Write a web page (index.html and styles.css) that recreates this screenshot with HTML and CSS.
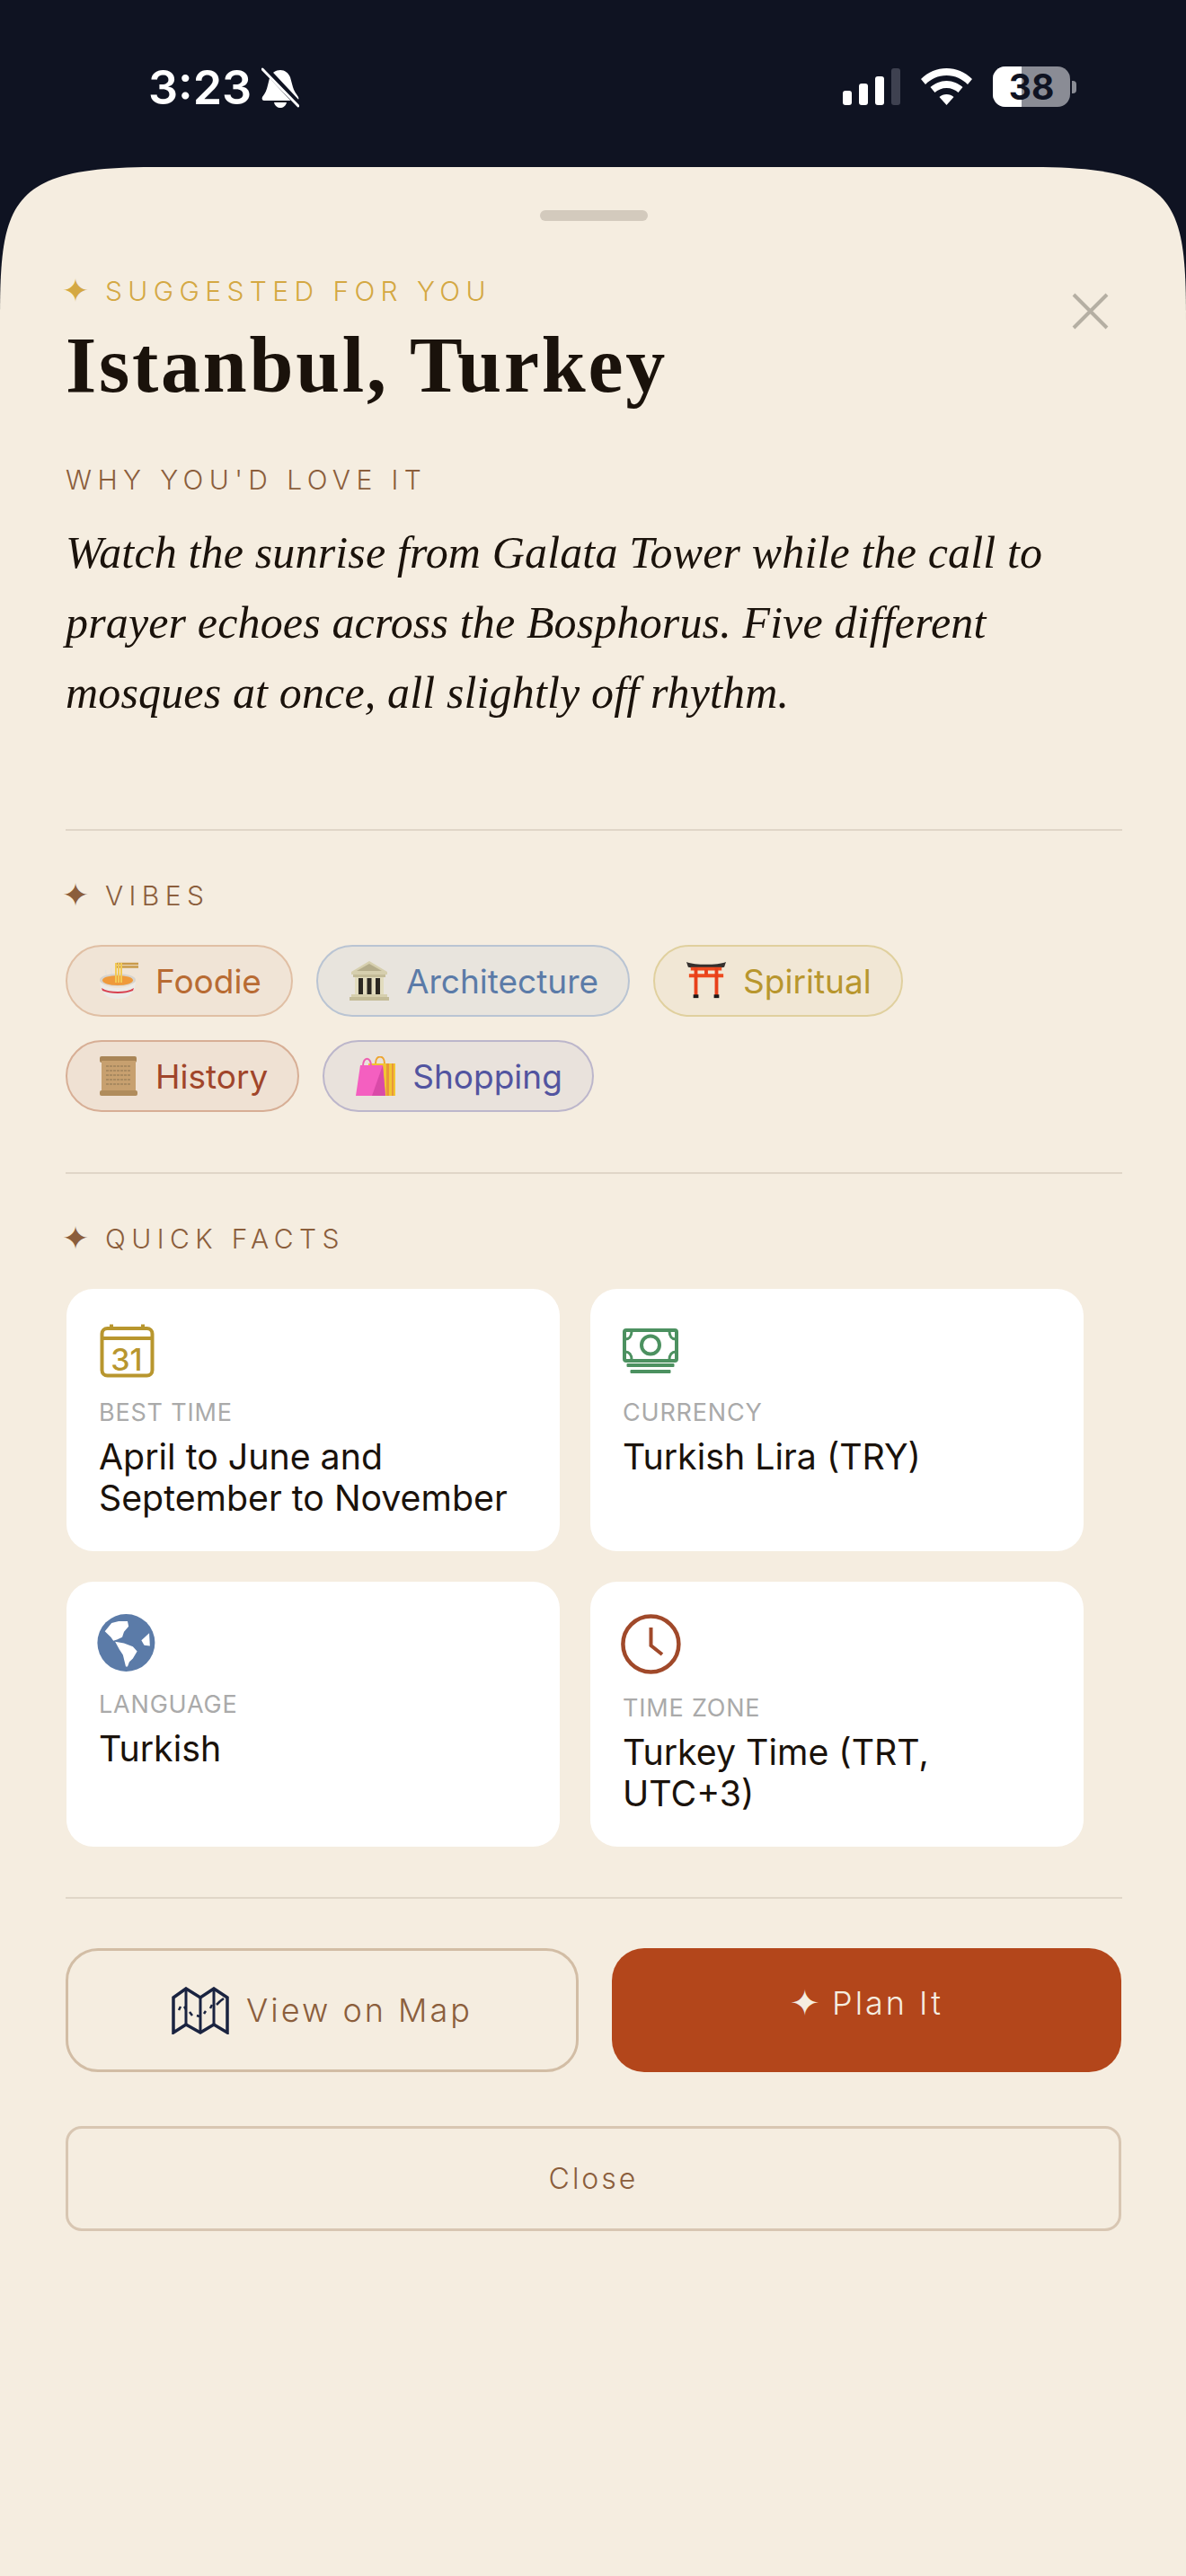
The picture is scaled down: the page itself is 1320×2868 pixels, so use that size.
FILE: index.html
```html
<!DOCTYPE html>
<html lang="en">
<head>
  <meta charset="UTF-8">
  <meta name="viewport" content="width=device-width, initial-scale=1.0">
  <title>Istanbul, Turkey</title>
  <link rel="stylesheet" href="styles.css">
</head>
<body>

  <!-- Status bar -->
  <header class="status-bar">
    <div class="status-left">
      <span class="status-time">3:23</span>
      <svg class="status-bell" viewBox="0 0 42 45">
        <path d="M21 3c5 0 9 3 11 8l3 11c1 4 4 8 6 11 1 2 0 4-2 4H3c-2 0-3-2-2-4 3-4 5-8 6-13l2-8c2-6 7-9 12-9z" fill="#fff"/>
        <path d="M14 39h14c-1 4-4 6-7 6s-6-2-7-6z" fill="#fff"/>
        <path d="M0 -3L42 42" stroke="#0f1322" stroke-width="7"/>
        <path d="M1 2L41 43" stroke="#fff" stroke-width="3" stroke-linecap="round"/>
      </svg>
    </div>
    <div class="status-right">
      <div class="signal">
        <span class="signal-bar signal-1"></span>
        <span class="signal-bar signal-2"></span>
        <span class="signal-bar signal-3"></span>
        <span class="signal-bar signal-4"></span>
      </div>
      <svg class="status-wifi" viewBox="0 0 57 41" fill="#fff">
        <path d="M28.500 0C39 0 49 4 57 12l-5 6C46 12 38 8 28.500 8S11 12 5 18l-5-6C8 4 18 0 28.500 0z"/>
        <path d="M28.500 14c7 0 13 3 18 7l-5 6c-3-3-8-5-13-5s-10 2-13 5l-5-6c5-4 11-7 18-7z"/>
        <path d="M28.500 29c3 0 6 1 8 3l-8 9-8-9c2-2 5-3 8-3z"/>
      </svg>
      <div class="battery">
        <div class="battery-body"><div class="battery-fill"></div><span class="battery-text">38</span></div>
        <div class="battery-nub"></div>
      </div>
    </div>
  </header>

  <main class="sheet">
    <div class="grabber"></div>

    <svg class="close-x" viewBox="0 0 41 41">
      <path d="M2 2L39 39M39 2L2 39" stroke="#b5afa3" stroke-width="4" fill="none"/>
    </svg>

    <div class="eyebrow"><span class="spark">✦</span>SUGGESTED FOR YOU</div>
    <h1 class="title">Istanbul, Turkey</h1>

    <div class="why-label">WHY YOU'D LOVE IT</div>
    <p class="why-text">Watch the sunrise from Galata Tower while the call to prayer echoes across the Bosphorus. Five different mosques at once, all slightly off rhythm.</p>

    <hr class="rule rule-why">

    <!-- Vibes -->
    <div class="section-label"><span class="spark">✦</span>VIBES</div>
    <div class="chips">
      <div class="chip chip-foodie">
        <svg class="chip-emoji" viewBox="0 0 44 44">
          <path d="M20 3H44M20 6.500H44" stroke="#c99a4a" stroke-width="2.500"/>
          <path d="M8 10c-2 3 2 4 0 8M14 8c-2 3 2 4 0 8" stroke="#e6e2da" stroke-width="1.500" fill="none"/>
          <ellipse cx="21" cy="21" rx="20" ry="7" fill="#d6d3ce"/>
          <ellipse cx="21" cy="21.500" rx="17" ry="5.500" fill="#ef9a3c"/>
          <path d="M18 2h2v22h-2zM21 2h2v22h-2zM24 2h2v22h-2z" fill="#f3ca55"/>
          <path d="M1 23c1 12 7 19 20 19s19-7 20-19c-5 5-12 7-20 7S6 28 1 23z" fill="#ecebe8"/>
          <path d="M3 30c5 3 11 4 18 4s13-1 18-4l-1 3c-5 2-10 3-17 3s-12-1-17-3z" fill="#d8404f"/>
        </svg>
        <span>Foodie</span>
      </div>
      <div class="chip chip-arch">
        <svg class="chip-emoji" viewBox="0 0 44 44">
          <path d="M22 0L42 12v3H2v-3z" fill="#d6cfae"/>
          <path d="M22 3L36 11H8z" fill="#b4ac8a"/>
          <rect x="4" y="15" width="36" height="3" fill="#c4bc98"/>
          <rect x="6" y="18" width="32" height="19" fill="#e2dcbe"/>
          <rect x="10" y="19" width="5" height="18" fill="#2b2822"/>
          <rect x="19.500" y="19" width="5" height="18" fill="#2b2822"/>
          <rect x="29" y="19" width="5" height="18" fill="#2b2822"/>
          <rect x="2" y="37" width="40" height="3" fill="#d6cfae"/>
          <rect x="0" y="40" width="44" height="4" fill="#c4bc98"/>
        </svg>
        <span>Architecture</span>
      </div>
      <div class="chip chip-spiritual">
        <svg class="chip-emoji" viewBox="0 0 46 44">
          <path d="M0 0c10 4 36 4 46 0l-2 6c-10 2-32 2-42 0z" fill="#34302e"/>
          <path d="M5 6h36v4H5zM3 14h40v4H3z" fill="#ee4a1e"/>
          <path d="M9 7h4v32H9zM33 7h4v32h-4zM21 9h4v6h-4z" fill="#e8401a"/>
          <rect x="8" y="38" width="6" height="4" fill="#1c1a1a"/>
          <rect x="32" y="38" width="6" height="4" fill="#1c1a1a"/>
        </svg>
        <span>Spiritual</span>
      </div>
      <div class="chip chip-history">
        <svg class="chip-emoji" viewBox="0 0 44 44">
          <rect x="1" y="0" width="41" height="7" rx="2" fill="#a98557"/>
          <rect x="3" y="5" width="38" height="34" fill="#c7a06f"/>
          <path d="M8 11h28M8 16h28M8 21h28M8 26h28M8 31h28" stroke="#a98a60" stroke-width="2" stroke-dasharray="3 1"/>
          <rect x="1" y="38" width="42" height="6" rx="2" fill="#b08c5c"/>
        </svg>
        <span>History</span>
      </div>
      <div class="chip chip-shopping">
        <svg class="chip-emoji" viewBox="0 0 44 44">
          <path d="M22 8C22 -2 32 -2 32 8" stroke="#eea52e" stroke-width="2" fill="none"/>
          <path d="M14 8h30v36H14z" fill="#f2c531"/>
          <path d="M34 8h3v36h-3zM40 8h2v36h-2z" fill="#e8973a"/>
          <path d="M8 11C8 0 17 0 17 11" stroke="#ee5fb0" stroke-width="2" fill="none"/>
          <path d="M5 10h25l3 34H0z" fill="#f45fc0"/>
          <path d="M30 10l3 34H18z" fill="#d94aa8"/>
        </svg>
        <span>Shopping</span>
      </div>
    </div>

    <hr class="rule rule-vibes">

    <!-- Quick facts -->
    <div class="section-label"><span class="spark">✦</span>QUICK FACTS</div>
    <div class="facts">
      <div class="fact">
        <div class="fact-icon">
          <svg viewBox="0 0 68 68">
            <rect x="3.500" y="8" width="56" height="52.500" rx="6" fill="none" stroke="#b8962e" stroke-width="4"/>
            <path d="M4 19H59M14 3.500V8M49 3.500V8" stroke="#b8962e" stroke-width="4" fill="none"/>
            <text x="31" y="55" text-anchor="middle" class="cal-num">31</text>
          </svg>
        </div>
        <div class="fact-label">BEST TIME</div>
        <div class="fact-value">April to June and September to November</div>
      </div>
      <div class="fact">
        <div class="fact-icon">
          <svg viewBox="0 0 68 68">
            <rect x="2" y="10" width="58" height="34" rx="2" fill="none" stroke="#4c9160" stroke-width="4"/>
            <circle cx="31" cy="26.500" r="10" fill="none" stroke="#4c9160" stroke-width="4"/>
            <path d="M3 20c4 0 7-3 7-9M59 20c-4 0-7-3-7-9M3 34c4 0 7 3 7 9M59 34c-4 0-7 3-7 9" fill="none" stroke="#4c9160" stroke-width="3"/>
            <rect x="4.500" y="47" width="53" height="4" rx="1" fill="#4c9160"/>
            <rect x="8.500" y="54" width="45" height="4" rx="1" fill="#4c9160"/>
          </svg>
        </div>
        <div class="fact-label">CURRENCY</div>
        <div class="fact-value">Turkish Lira (TRY)</div>
      </div>
      <div class="fact">
        <div class="fact-icon fact-icon-globe">
          <svg viewBox="0 0 68 68">
            <circle cx="30.400" cy="32" r="32" fill="#5b7ba8"/>
            <g transform="translate(-1.600 0) scale(.395)" fill="#fff">
              <path d="M21 49L40 25L60 20L85 20L88 35L75 50L70 65L55 72L45 75L38 65z"/>
              <path d="M50 78L75 82L100 92L112 105L100 125L90 135L85 148L80 148L72 115L62 100z"/>
              <path d="M124 74L146 54L148 90L132 88z"/>
            </g>
          </svg>
        </div>
        <div class="fact-label">LANGUAGE</div>
        <div class="fact-value">Turkish</div>
      </div>
      <div class="fact">
        <div class="fact-icon fact-icon-clock">
          <svg viewBox="0 0 68 68">
            <circle cx="31.400" cy="33.500" r="31" fill="none" stroke="#a0492a" stroke-width="4.500"/>
            <path d="M31.500 15V35L44 45" fill="none" stroke="#a0492a" stroke-width="4"/>
          </svg>
        </div>
        <div class="fact-label">TIME ZONE</div>
        <div class="fact-value">Turkey Time (TRT, UTC+3)</div>
      </div>
    </div>

    <hr class="rule rule-facts">

    <!-- Actions -->
    <div class="actions">
      <button class="btn btn-map">
        <svg class="map-icon" viewBox="0 0 64 53">
          <path d="M2 12L16 2L32 12L47 2L62 12V51L47 42L32 51L16 42L2 51z" fill="none" stroke="#1a2340" stroke-width="3.500" stroke-linejoin="miter"/>
          <path d="M16 2V42M32 12V51M47 2V42" stroke="#1a2340" stroke-width="3" fill="none"/>
          <path d="M8 26l2-4M14 22l2 3M20 28l3 4M28 32l3 1M36 30l2-3M43 24l2-4M50 20l4-4M54 16l4-3" stroke="#1a2340" stroke-width="2.500" fill="none"/>
        </svg>
        <span>View on Map</span>
      </button>
      <button class="btn btn-plan"><span class="spark spark-plan">✦</span>Plan It</button>
    </div>
    <button class="btn-close">Close</button>
  </main>

</body>
</html>
```

FILE: styles.css
```css
* {
  box-sizing: border-box;
}

body {
  margin: 0;
  width: 1320px;
  height: 2868px;
  display: flex;
  flex-direction: column;
  background-color: #0f1322;
  font-family: Inter, 'Noto Sans', sans-serif;
  color: #1a120b;
  overflow: hidden;
}

/* Status bar */
.status-bar {
  height: 186px;
  flex-shrink: 0;
  display: flex;
  justify-content: space-between;
  align-items: flex-start;
  padding: 74px 122px 0 165px;
}

.status-left {
  display: flex;
  align-items: flex-start;
  gap: 11px;
}

.status-time {
  margin-top: 1px;
  font-size: 52px;
  font-weight: 600;
  line-height: 46px;
  color: #fff;
}

.status-bell {
  width: 42px;
  height: 45px;
  margin-top: 1px;
}

.status-right {
  display: flex;
  align-items: flex-start;
  gap: 23px;
}

.signal {
  display: flex;
  align-items: flex-end;
  gap: 7.500px;
  height: 41px;
  margin-top: 2px;
}

.signal-bar {
  width: 10.500px;
  border-radius: 3px;
  background-color: #fff;
}

.signal-1 { height: 16px; }
.signal-2 { height: 24px; }
.signal-3 { height: 32px; }
.signal-4 { height: 41px; background-color: #3e4150; }

.status-wifi {
  width: 57px;
  height: 41px;
  margin-top: 2px;
}

.battery {
  display: flex;
  align-items: center;
  gap: 2px;
}

.battery-body {
  position: relative;
  width: 86px;
  height: 45px;
  border-radius: 14px;
  background-color: #8a8c95;
  overflow: hidden;
}

.battery-fill {
  width: 32px;
  height: 100%;
  background-color: #fff;
}

.battery-text {
  position: absolute;
  left: 0;
  right: 0;
  top: 0;
  line-height: 45px;
  text-align: center;
  font-size: 39px;
  font-weight: 700;
  color: #0f1322;
}

.battery-nub {
  width: 5px;
  height: 14px;
  border-radius: 0 4px 4px 0;
  background-color: #8a8c95;
}

/* Sheet */
.sheet {
  position: relative;
  flex: 1;
  padding: 48px 71px 0 73px;
  background-color: #f5ede0;
  clip-path: path('M0 170C0 40 10 0 170 0H1150C1310 0 1320 40 1320 170V2682H0Z');
}

.grabber {
  width: 120px;
  height: 12px;
  margin: 0 auto 60px;
  border-radius: 6px;
  background-color: #d3cabd;
}

.close-x {
  position: absolute;
  top: 140px;
  left: 1193px;
  width: 41px;
  height: 41px;
}

.spark {
  font-family: 'DejaVu Sans', sans-serif;
  letter-spacing: 0;
}

.eyebrow {
  display: flex;
  align-items: center;
  height: 36px;
  font-size: 30px;
  font-weight: 300;
  letter-spacing: 6.400px;
  color: #d4a843;
}

.eyebrow .spark,
.section-label .spark {
  width: 22px;
  margin-right: 22px;
  font-size: 36px;
  line-height: 36px;
  text-align: center;
  display: flex;
  justify-content: center;
}

.title {
  margin: 17px 0 0;
  font-family: 'Liberation Serif', serif;
  font-size: 88px;
  font-weight: 700;
  line-height: 96px;
  letter-spacing: 2.750px;
  color: #1a120b;
}

.why-label {
  margin-top: 61px;
  font-size: 30px;
  font-weight: 300;
  line-height: 36px;
  letter-spacing: 6.400px;
  color: #8b5e3c;
}

.why-text {
  margin: 24px 0 0;
  font-family: 'Liberation Serif', serif;
  font-size: 50px;
  font-style: italic;
  line-height: 78px;
  letter-spacing: 0.150px;
  color: #1a120b;
}

.rule {
  height: 2px;
  margin: 0;
  border: 0;
  background-color: #e0d6c8;
}

.rule-why { margin-top: 113px; }
.rule-vibes { margin-top: 67px; }
.rule-facts { margin-top: 56px; }

.section-label {
  display: flex;
  align-items: center;
  height: 36px;
  margin-top: 54px;
  font-size: 30px;
  font-weight: 300;
  letter-spacing: 6.400px;
  color: #8b5e3c;
}

/* Vibes */
.chips {
  display: flex;
  flex-wrap: wrap;
  gap: 26px;
  margin-top: 37px;
}

.chip {
  display: flex;
  align-items: center;
  gap: 19px;
  height: 80px;
  padding: 0 33px 0 35px;
  border: 2px solid;
  border-radius: 40px;
  font-size: 37px;
  white-space: nowrap;
}

.chip-emoji {
  width: 44px;
  height: 44px;
}

.chip-foodie { background-color: #f0e4d6; border-color: #e0bfa4; color: #b86b33; }
.chip-arch { background-color: #e8e4dd; border-color: #b9c4d3; color: #5b7ba8; }
.chip-spiritual { background-color: #f1e7d5; border-color: #e0d09e; color: #b8962e; }
.chip-history { background-color: #efe1d3; border-color: #d7ae95; color: #a0452a; }
.chip-shopping { background-color: #e9e2dc; border-color: #bcb6cb; color: #5254a0; }

/* Quick facts */
.facts {
  display: grid;
  grid-template-columns: 549px 549px;
  gap: 34px;
  margin: 38px 0 0 1px;
}

.fact {
  padding: 36px;
  border-radius: 30px;
  background-color: #fff;
}

.fact-icon {
  height: 86px;
}

.fact-icon svg {
  display: block;
  width: 68px;
  height: 68px;
  overflow: visible;
}

.fact-icon-globe { height: 85px; }
.fact-icon-clock { height: 89px; }

.cal-num {
  font-family: Inter, sans-serif;
  font-size: 34px;
  font-weight: 500;
  fill: #b8962e;
}

.fact-label {
  font-size: 27px;
  line-height: 32px;
  letter-spacing: 0.800px;
  color: #aaa;
}

.fact-value {
  margin-top: 10px;
  font-size: 39.300px;
  line-height: 46px;
  color: #1a120b;
}

/* Actions */
.actions {
  display: grid;
  grid-template-columns: 571px 567px;
  gap: 37px;
  margin-top: 55px;
}

.btn {
  display: flex;
  align-items: center;
  justify-content: center;
  height: 138px;
  padding: 0;
  font-family: Inter, sans-serif;
  font-size: 36px;
  font-weight: 300;
  letter-spacing: 3px;
  border-radius: 36px;
}

.btn-map {
  gap: 19px;
  border: 3px solid #d2bda5;
  background: transparent;
  color: #8b5e3c;
}

.map-icon {
  width: 64px;
  height: 53px;
}

.btn-plan {
  gap: 13px;
  padding-bottom: 16px;
  border: 0;
  background-color: #b3461b;
  color: #f5ede0;
}

.spark-plan {
  font-size: 40px;
  line-height: 40px;
}

.btn-close {
  display: block;
  width: 1175px;
  height: 117px;
  margin-top: 60px;
  padding: 0;
  border: 3px solid #d8c6b2;
  border-radius: 18px;
  background: transparent;
  font-family: Inter, sans-serif;
  font-size: 32px;
  font-weight: 300;
  letter-spacing: 3px;
  color: #8b5e3c;
}
```
